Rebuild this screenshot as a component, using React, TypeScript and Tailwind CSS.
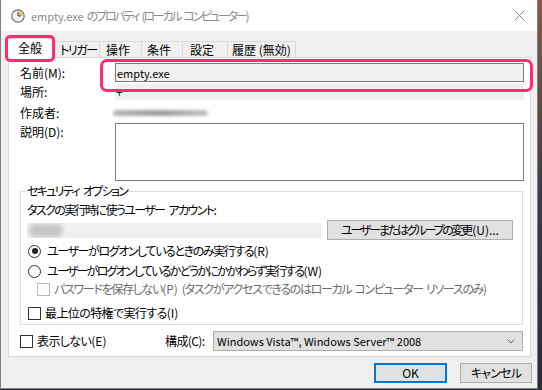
import React from "react";

function ClockIcon() {
  return (
    <svg width="14" height="14" viewBox="0 0 14 14" className="shrink-0">
      <circle cx="7" cy="7" r="6.2" fill="#f4f4f4" stroke="#6e6e6e" strokeWidth="1.2" />
      <path d="M7 7 L7 2.2 A4.8 4.8 0 0 1 11.8 7 Z" fill="#e8c15a" />
      <path d="M7 3.2 V7 H10" fill="none" stroke="#444" strokeWidth="1" />
    </svg>
  );
}

function Radio({ checked }: { checked?: boolean }) {
  return (
    <span className="w-[13px] h-[13px] rounded-full border border-[#333] bg-white flex items-center justify-center shrink-0">
      {checked && <span className="w-[6px] h-[6px] rounded-full bg-[#222]" />}
    </span>
  );
}

function Check({ disabled }: { disabled?: boolean }) {
  return (
    <span
      className={
        disabled
          ? "w-[13px] h-[13px] border border-[#bcbcbc] bg-white shrink-0"
          : "w-[13px] h-[13px] border border-[#333] bg-white shrink-0"
      }
    />
  );
}

export default function App() {
  return (
    <div className="w-[542px] h-[390px] flex bg-linear-to-b from-[#8a5a44] via-[#3b3c48] to-[#262b36] font-['Noto_Sans_CJK_JP',sans-serif] text-[12px] leading-[14px] text-black [font-feature-settings:'palt'] whitespace-nowrap overflow-hidden">
      <div className="relative w-[538px] h-[389px] flex flex-col bg-[#f0f0f0] border-l border-r border-b border-[#808080] shrink-0">
        {/* title bar */}
        <div className="h-[31px] bg-white flex items-center shrink-0 text-[#8c8c8c] leading-[16px]">
          <span className="ml-[10px]">
            <ClockIcon />
          </span>
          <span className="ml-[6px] text-[11px]">empty.exe</span>
          <span className="ml-[3px] tracking-[-2.2px]">のプロパティ</span>
          <span className="ml-[3px] tracking-[-2.2px]">(ローカル</span>
          <span className="ml-[3px] tracking-[-2.2px]">コンピューター)</span>
          <svg width="11" height="11" viewBox="0 0 11 11" className="ml-auto mr-[12px]">
            <path d="M0.5 0.5 L10.5 10.5 M10.5 0.5 L0.5 10.5" stroke="#8a8a8a" strokeWidth="1" fill="none" />
          </svg>
        </div>

        {/* tabs */}
        <div className="h-[26px] flex items-end pl-[6px] shrink-0">
          <div className="relative z-10 -mb-px w-[48px] h-[20px] bg-white border border-b-0 border-[#d9d9d9] pl-[10px] pt-[2px]">全般</div>
          <div className="w-[45px] h-[16px] border-t border-r border-[#d9d9d9] pl-[5px] pt-[1px] tracking-[-1.4px]">トリガー</div>
          <div className="w-[42px] h-[16px] border-t border-r border-[#d9d9d9] pl-[6px] pt-[1px]">操作</div>
          <div className="w-[41px] h-[16px] border-t border-r border-[#d9d9d9] pl-[5px] pt-[1px]">条件</div>
          <div className="w-[45px] h-[16px] border-t border-r border-[#d9d9d9] pl-[7px] pt-[1px]">設定</div>
          <div className="w-[68px] h-[16px] border-t border-r border-[#d9d9d9] pl-[4px] pt-[1px]">履歴 (無効)</div>
        </div>

        {/* panel */}
        <div className="ml-[7px] w-[523px] h-[300px] border border-[#d9d9d9] bg-white pl-[11px] flex flex-col shrink-0">
          <div className="mt-[5px] h-[19px] flex items-center">
            <span className="w-[95px]">名前(M):</span>
            <div className="w-[409px] h-[19px] border border-[#7a7a7a] bg-[#f0f0f0] pl-[1px] flex items-center text-[11px]">empty.exe</div>
          </div>
          <div className="mt-[2px] h-[16px] flex items-center">
            <span className="w-[95px]">場所:</span>
            <div className="w-[409px] h-[16px] bg-[#f0f0f0] pl-[1px] flex items-center">+</div>
          </div>
          <div className="mt-[6px] h-[14px] flex items-center">
            <span className="w-[95px]">作成者:</span>
            <div className="-ml-[2px] w-[95px] h-[6px] rounded-full bg-linear-to-r from-[#b8b8b8] via-[#9c9c9c] to-[#c4c4c4] blur-[1.5px]" />
          </div>
          <div className="mt-[3px] h-[58px] flex items-start">
            <span className="w-[95px] pt-[2px]">説明(D):</span>
            <div className="w-[409px] h-[58px] border border-[#7a7a7a] bg-white" />
          </div>

          <fieldset className="mt-[3px] w-[503px] border border-[#dcdcdc] pl-[6px] pr-[9px] pb-[4px]">
            <legend className="px-0 leading-[14px]">
              <span className="tracking-[-1.7px]">セキュリティ</span>
              <span className="ml-[4px] tracking-[-1.7px]">オプション</span>
            </legend>
            <div className="mt-[5px] h-[14px] flex items-center">
              <span className="tracking-[-1.6px]">タスクの実行時に使うユーザー</span>
              <span className="ml-[4px] tracking-[-1.6px]">アカウント</span>
              <span>:</span>
            </div>
            <div className="mt-[3px] h-[20px] flex items-center">
              <div className="relative w-[295px] h-[15px] bg-[#f0f0f0] overflow-hidden">
                <div className="absolute left-[2px] top-[1px] w-[34px] h-[13px] rounded-full bg-[#c6c6c6] blur-[2px]" />
              </div>
              <div className="ml-[5px] w-[186px] h-[20px] bg-[#e1e1e1] border border-[#adadad] flex items-center justify-center">
                <span className="tracking-[-2.2px]">ユーザーまたはグループの変更</span>
                <span className="ml-[1px]">(U)...</span>
              </div>
            </div>
            <div className="mt-[4px] h-[14px] flex items-center pl-[1px]">
              <Radio checked />
              <span className="ml-[6px] tracking-[-1.4px]">ユーザーがログオンしているときのみ実行する</span>
              <span>(R)</span>
            </div>
            <div className="mt-[6px] h-[14px] flex items-center pl-[1px]">
              <Radio />
              <span className="ml-[6px] tracking-[-1.75px]">ユーザーがログオンしているかどうかにかかわらず実行する</span>
              <span>(W)</span>
            </div>
            <div className="mt-[4px] h-[14px] flex items-center pl-[10px] text-[#6d6d6d]">
              <Check disabled />
              <span className="ml-[4px] tracking-[-1.3px]">パスワードを保存しない</span>
              <span>(P)</span>
              <span className="ml-[4px] tracking-[-1.3px]">(タスクがアクセスできるのはローカル</span>
              <span className="ml-[3px] tracking-[-1.3px]">コンピューター</span>
              <span className="ml-[3px] tracking-[-1.3px]">リソースのみ)</span>
            </div>
            <div className="mt-[10px] h-[14px] flex items-center pl-[1px]">
              <Check />
              <span className="ml-[4px] tracking-[-0.6px]">最上位の特権で実行する</span>
              <span>(I)</span>
            </div>
          </fieldset>

          <div className="mt-[6px] h-[20px] flex items-center">
            <Check />
            <span className="ml-[4px] w-[128px]">
              <span className="tracking-[-0.6px]">表示しない</span>
              <span>(E)</span>
            </span>
            <span className="w-[48px] tracking-[-0.6px]">構成(C):</span>
            <div className="w-[310px] h-[20px] bg-[#e1e1e1] border border-[#adadad] flex items-center pl-[3px] pr-[7px]">
              <span className="text-[11px]">Windows Vista™, Windows Server™ 2008</span>
              <svg width="8" height="5" viewBox="0 0 8 5" className="ml-auto">
                <path d="M0.5 0.5 L4 4 L7.5 0.5" stroke="#666" strokeWidth="1" fill="none" />
              </svg>
            </div>
          </div>
        </div>

        {/* buttons */}
        <div className="mt-[6px] flex justify-end pr-[5px] gap-[13px]">
          <div className="w-[73px] h-[20px] bg-[#e1e1e1] border-2 border-[#0078d7] flex items-center justify-center">OK</div>
          <div className="w-[72px] h-[20px] bg-[#e1e1e1] border border-[#adadad] flex items-center justify-center tracking-[-0.8px]">キャンセル</div>
        </div>

        {/* highlight overlays */}
        <div className="absolute left-[4px] top-[35px] w-[50px] h-[27px] border-[3px] border-[#fe2c6c] rounded-[5px] z-20" />
        <div className="absolute left-[99px] top-[59px] w-[433px] h-[33px] border-[3px] border-[#fe2c6c] rounded-[7px] z-20" />
      </div>
    </div>
  );
}
